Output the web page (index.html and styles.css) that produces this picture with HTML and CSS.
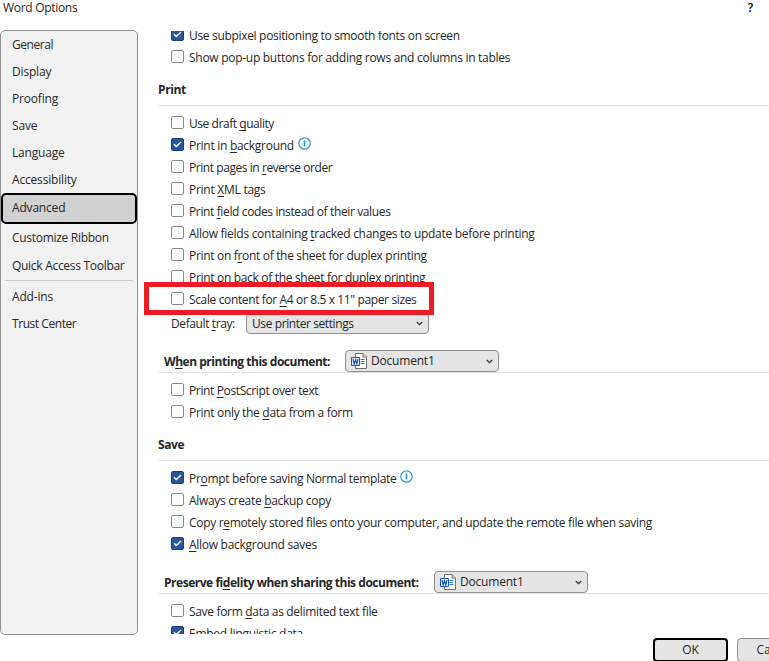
FILE: index.html
```html
<!DOCTYPE html>
<html lang="en">
<head>
<meta charset="utf-8">
<title>Word Options</title>
<link rel="stylesheet" href="styles.css">
</head>
<body>
<svg class="defs" aria-hidden="true">
  <symbol id="info" viewBox="0 0 13 13"><circle cx="6.5" cy="6.5" r="5.7" fill="#fff" stroke="#2f96d0" stroke-width="1.2"/><path d="M6.5 3.5v6" stroke="#2f96d0" stroke-width="1.7"/></symbol>
  <symbol id="tick" viewBox="0 0 13 13"><path d="M3 6.3 5.3 8.6 10 4" fill="none" stroke="#fff" stroke-width="1.4"/></symbol>
  <symbol id="chev" viewBox="0 0 7 5"><path d="M.8 1 3.5 3.6 6.2 1" fill="none" stroke="#333" stroke-width="1.3"/></symbol>
  <symbol id="word" viewBox="0 0 16 16"><path d="M4.500.5h7.500l3.500 3.500v11.500h-11z" fill="#fff" stroke="#6f6f6f"/><path d="M12 .5v3.500h3.500" fill="#ddd" stroke="#6f6f6f"/><path d="M9.500 6.500h4M9.500 8.500h4M9.500 10.500h4" stroke="#2b7cd3"/><path d="M.5 4.500h8v8h-8z" fill="#e8f0fb" stroke="#185abd"/><path d="m2 6 1.200 5L4.500 6.800 5.800 11 7 6" fill="none" stroke="#185abd" stroke-width="1.200"/></symbol>
</svg>
<header class="titlebar"><span>Word Options</span><span class="help">?</span></header>
<div class="content">
  <nav class="nav">
    <a class="tight">General</a><a>Display</a><a>Proofing</a><a>Save</a><a>Language</a><a>Accessibility</a>
    <a class="selected">Advanced</a>
    <a class="tall">Customize Ribbon</a><a class="tall">Quick Access Toolbar</a>
    <hr>
    <a>Add-ins</a><a class="tight">Trust Center</a>
  </nav>
  <main class="panel">
    <div class="rows first">
      <label class="row"><i class="box on"><svg><use href="#tick"/></svg></i><span>Use subpixel positioning to smooth fonts on screen</span></label>
      <label class="row wider"><i class="box"></i><span>Show pop-up buttons for adding rows and columns in tables</span></label>
    </div>
    <h2>Print</h2>
    <div class="rows">
      <label class="row tight"><i class="box"></i><span>Use draft <u>q</u>uality</span></label>
      <label class="row wider"><i class="box on"><svg><use href="#tick"/></svg></i><span>Print in <u>b</u>ackground</span><svg class="info"><use href="#info"/></svg></label>
      <label class="row tight"><i class="box"></i><span>Print pages in <u>r</u>everse order</span></label>
      <label class="row loose"><i class="box"></i><span>Print <u>X</u>ML tags</span></label>
      <label class="row snug"><i class="box"></i><span>Print <u>f</u>ield codes instead of their values</span></label>
      <label class="row wider"><i class="box"></i><span>Allow fields containing <u>t</u>racked changes to update before printing</span></label>
      <label class="row"><i class="box"></i><span>Print on f<u>r</u>ont of the sheet for duplex printing</span></label>
      <label class="row"><i class="box"></i><span>Print on <u>b</u>ack of the sheet for duplex printing</span></label>
      <label class="row marked snug"><i class="box"></i><span>Scale content for <u>A</u>4 or 8.5 x 11" paper sizes</span></label>
    </div>
    <div class="tray"><span class="traylabel">Default <u>t</u>ray:</span><div class="select wide"><span>Use printer settings</span><svg class="chev"><use href="#chev"/></svg></div></div>
    <div class="group"><h3 class="g1">W<u>h</u>en printing this document:</h3><div class="select"><svg class="word"><use href="#word"/></svg><span>Document1</span><svg class="chev"><use href="#chev"/></svg></div></div>
    <div class="rows">
      <label class="row snug"><i class="box"></i><span>Print <u>P</u>ostScript over text</span></label>
      <label class="row"><i class="box"></i><span>Print only the <u>d</u>ata from a form</span></label>
    </div>
    <h2>Save</h2>
    <div class="rows">
      <label class="row"><i class="box on"><svg><use href="#tick"/></svg></i><span>Pr<u>o</u>mpt before saving Normal template</span><svg class="info"><use href="#info"/></svg></label>
      <label class="row"><i class="box"></i><span>Always create <u>b</u>ackup copy</span></label>
      <label class="row"><i class="box"></i><span>Copy r<u>e</u>motely stored files onto your computer, and update the remote file when saving</span></label>
      <label class="row wider"><i class="box on"><svg><use href="#tick"/></svg></i><span><u>A</u>llow background saves</span></label>
    </div>
    <div class="group"><h3 class="g2">Preserve fi<u>d</u>elity when sharing this document:</h3><div class="select"><svg class="word"><use href="#word"/></svg><span>Document1</span><svg class="chev"><use href="#chev"/></svg></div></div>
    <div class="rows">
      <label class="row"><i class="box"></i><span>Save form <u>d</u>ata as delimited text file</span></label>
      <label class="row loose"><i class="box on"><svg><use href="#tick"/></svg></i><span>Embed linguistic data</span></label>
    </div>
  </main>
</div>
<footer class="actions"><button class="ok">OK</button><button>Cancel</button></footer>
</body>
</html>
```
FILE: styles.css
```css
*, ::after { box-sizing: border-box; }
body { margin: 0; width: 769px; height: 661px; overflow: hidden; background: #fff; color: #262626; font: 12px/16px "Open Sans", sans-serif; letter-spacing: -0.2px; }
.defs { display: none; }
.titlebar { height: 30px; display: flex; justify-content: space-between; padding: 0 16px 0 3px; letter-spacing: -0.3px; }
.help { color: #000; font-weight: 600; }
.content { display: flex; height: 605px; }
.nav { width: 138px; flex: none; border: 1px solid #919191; border-radius: 5px; background: #f2f2f2; display: flex; flex-direction: column; }
.nav a { height: 27px; line-height: 27px; padding-left: 11px; flex: none; letter-spacing: -0.18px; }
.nav .selected { height: 31px; line-height: 26px; border: 2px solid #000; border-radius: 5px; background: #d1d1d1; padding-left: 9px; }
.nav .tall { height: 28px; line-height: 28px; letter-spacing: -0.29px; }
.nav hr { width: 128px; height: 1px; margin: 0 4px 2px; border: 0; background: #cdcdcd; flex: none; }
.panel { flex: 1; margin: 1px 0; padding-left: 20px; overflow: hidden; }
.rows { padding-left: 13px; }
.first { margin-top: -7px; }
.row { display: flex; height: 22px; white-space: nowrap; letter-spacing: -0.32px; }
.row > span { line-height: 24px; margin-left: 5px; }
.snug { letter-spacing: -0.37px; }
.tight, .nav .tight { letter-spacing: -0.44px; }
.loose { letter-spacing: -0.26px; }
.wider { letter-spacing: -0.28px; }
.box { width: 13px; height: 13px; margin-top: 4px; flex: none; border: 1px solid #8a8a8a; border-radius: 2px; background: #fff; }
.box.on { border-color: #17407f; background: #2b579a; }
.box svg { display: block; width: 13px; height: 13px; margin: -1px; }
.info { width: 13px; height: 13px; margin: 3px 0 0 4px; }
u { text-decoration-thickness: 1px; text-underline-offset: 2px; text-decoration-skip-ink: none; }
h2, h3 { margin: 0; font-size: 12px; font-weight: 700; letter-spacing: -0.47px; }
h2 { height: 38px; margin-bottom: 6px; padding-top: 14px; border-bottom: 1px solid #e1e1e1; letter-spacing: -0.38px; }
.marked { position: relative; }
.marked::after { content: ""; position: absolute; left: -27px; top: -6px; width: 290px; height: 33px; border: 5px solid #ed1c24; }
.tray { display: flex; height: 24px; padding: 3px 0 0 13px; letter-spacing: -0.4px; }
.traylabel { width: 75px; line-height: 22px; }
.select { width: 154px; height: 22px; display: flex; align-items: center; border: 1px solid #919191; border-radius: 4px; background: #e5e5e5; padding: 0 5px; white-space: nowrap; }
.wide { width: 183px; height: 21px; }
.chev { width: 7px; height: 5px; margin-left: auto; }
.word { width: 16px; height: 16px; margin-right: 4px; }
.group { display: flex; height: 39px; margin-bottom: 6px; padding: 16px 0 0 6px; border-bottom: 1px solid #e1e1e1; }
.group h3 { line-height: 23px; white-space: nowrap; flex: none; }
.g1 { width: 181px; }
.g2 { width: 270px; }
.actions { display: flex; gap: 9px; padding: 3px 0 0 653px; }
.actions button { width: 75px; height: 24px; flex: none; padding: 0; border: 1px solid #919191; border-radius: 4px; background: #e5e5e5; font: inherit; color: inherit; letter-spacing: inherit; }
.actions .ok { border: 2px solid #000; }
```
